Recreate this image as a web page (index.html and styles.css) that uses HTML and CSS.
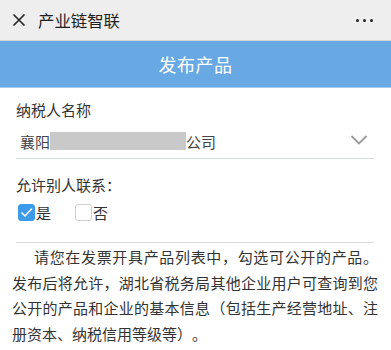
FILE: index.html
```html
<!DOCTYPE html>
<html lang="zh-CN">
<head>
<meta charset="utf-8">
<title>产业链智联</title>
<link rel="stylesheet" href="styles.css">
</head>
<body>
<header class="topbar">
  <svg class="close" width="14" height="14" viewBox="0 0 14 14"><path d="M1.5 1.5 L12.5 12.5 M12.5 1.5 L1.5 12.5" stroke="#222" stroke-width="1.6" fill="none"/></svg>
  <span class="app-title">产业链智联</span>
  <span class="more"><i></i><i></i><i></i></span>
</header>
<div class="banner">发布产品</div>
<main class="form">
  <div class="label">纳税人名称</div>
  <div class="select">
    <span class="sel-text">襄阳<span class="mask"></span>公司</span>
    <svg class="chev" width="18" height="10" viewBox="0 0 18 10"><path d="M1.5 1 L9 8.5 L16.5 1" stroke="#9a9a9a" stroke-width="1.8" fill="none"/></svg>
  </div>
  <div class="label label-gap">允许别人联系：</div>
  <div class="choices">
    <label class="choice"><span class="box checked"><svg width="17" height="17" viewBox="0 0 17 17"><path d="M3.5 8.5 L7 12 L14 4.5" stroke="#fff" stroke-width="1.5" fill="none"/></svg></span>是</label>
    <label class="choice"><span class="box"></span>否</label>
  </div>
  <p class="notice">请您在发票开具产品列表中，勾选可公开的产品。发布后将允许，湖北省税务局其他企业用户可查询到您公开的产品和企业的基本信息（包括生产经营地址、注册资本、纳税信用等级等）。</p>
</main>
</body>
</html>
```
FILE: styles.css
```css
* { box-sizing: border-box; }
body {
  margin: 0;
  background: #fff;
  font-family: "Noto Sans CJK SC", "Noto Sans", sans-serif;
  color: #333;
}
.topbar {
  height: 41px;
  background: #eeeeee;
  border-bottom: 1px solid #d2d2d2;
  display: flex;
  align-items: center;
  padding: 0 18px 0 12px;
}
.close { display: block; margin-right: 12px; }
.app-title {
  font-size: 16.4px;
  color: #1f1f1f;
  line-height: 20px;
  flex: 1;
}
.more { display: flex; gap: 4px; align-items: center; }
.more i {
  display: block;
  width: 3px;
  height: 3px;
  border-radius: 50%;
  background: #222;
}
.banner {
  height: 47px;
  background: #68a9e3;
  border-bottom: 1px solid #a3cbef;
  color: #fff;
  font-size: 18px;
  display: flex;
  align-items: center;
  justify-content: center;
  letter-spacing: 0.5px;
}
.form { padding: 0 17px 0 16px; }
.label {
  margin-top: 12px;
  font-size: 15px;
  line-height: 20px;
  color: #333;
}
.label-gap { margin-top: 16px; }
.select {
  margin-top: 4px;
  height: 35px;
  border-bottom: 1px solid #d9dce3;
  display: flex;
  align-items: center;
  justify-content: space-between;
  padding: 0 6px 0 4px;
}
.sel-text {
  display: flex;
  align-items: center;
  font-size: 15px;
  color: #444;
}
.mask {
  display: inline-block;
  width: 136px;
  height: 18px;
  background: #c9c9c9;
}
.chev { display: block; margin-top: -2px; }
.choices {
  display: flex;
  gap: 24px;
  margin-top: 8px;
  padding: 0 0 20px 2px;
  border-bottom: 1px solid #d9dce3;
}
.choice {
  display: flex;
  align-items: center;
  font-size: 15px;
  line-height: 19px;
  color: #333;
}
.box {
  display: block;
  width: 17px;
  height: 17px;
  border: 1px solid #cfcfcf;
  border-radius: 3px;
  background: #fff;
  margin-right: 1px;
}
.box.checked {
  background: #3d9be9;
  border-color: #3d9be9;
  position: relative;
}
.box.checked svg { position: absolute; left: -1px; top: -1px; }
.notice {
  margin: 1px -4px 0 -4px;
  font-size: 15px;
  line-height: 25.5px;
  text-indent: 22px;
  text-align: justify;
  text-spacing-trim: space-all;
  color: #333;
}
```
